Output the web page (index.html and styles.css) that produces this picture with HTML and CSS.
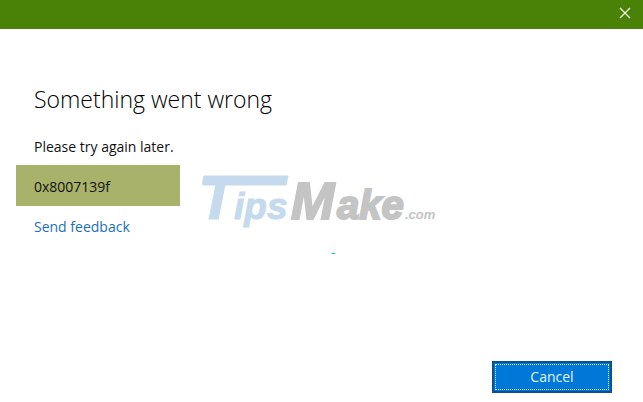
FILE: index.html
```
<!DOCTYPE html>
<html lang="en">
<head>
    <meta charset="UTF-8">
    <title>Something went wrong</title>
    <link rel="stylesheet" href="styles.css">
</head>
<body>
    <header class="title-bar">
        <button class="close-btn" type="button" aria-label="Close">
            <svg width="12" height="12" viewBox="0 0 12 12">
                <path d="M1 1L11 11M11 1L1 11" fill="none" stroke="#f4fbe4" stroke-width="1.2"/>
            </svg>
        </button>
    </header>

    <main class="content">
        <h1 class="heading">Something went wrong</h1>
        <p class="message">Please try again later.</p>
        <p class="error-code">0x8007139f</p>
        <a class="feedback" href="#">Send feedback</a>
    </main>

    <footer class="actions">
        <button class="cancel-btn" type="button">Cancel</button>
    </footer>

    <!-- watermark over the dialog -->
    <svg class="watermark" width="260" height="110" viewBox="0 -20 260 110">
        <g class="mark-blue">
            <path d="M13 7H97L95 16H12Z"/>
            <text x="7" y="50" font-size="62">T</text>
            <text x="43" y="50" font-size="37">ips</text>
        </g>
        <g class="mark-gray">
            <text x="100" y="50" font-size="52">M</text>
            <text x="146" y="50" font-size="40">ake</text>
        </g>
        <text class="mark-domain" x="214" y="50" font-size="13">.com</text>
        <path d="M140 85Q142 82 145 85Z" fill="#35b5bd"/>
    </svg>
</body>
</html>
```
FILE: styles.css
```
* {
    box-sizing: border-box;
}

body {
    margin: 0;
    min-height: 100vh;
    display: flex;
    flex-direction: column;
    position: relative;
    background: #fff;
    color: #111;
    font-family: "Segoe UI", "Open Sans", sans-serif;
    font-size: 14px;
    line-height: 20px;
}

.title-bar {
    display: flex;
    justify-content: flex-end;
    height: 29px;
    background: #4a8208;
}

.close-btn {
    display: flex;
    align-items: center;
    justify-content: center;
    width: 36px;
    padding: 0 0 3px;
    border: none;
    background: none;
    cursor: pointer;
}

.content {
    flex: 1;
    display: flex;
    flex-direction: column;
    align-items: flex-start;
    padding: 54px 34px 0;
}

.heading {
    margin: 0 0 22px;
    font-size: 23px;
    font-weight: 300;
    line-height: 32px;
    color: #000;
}

.message {
    margin: 0 0 8px;
}

.error-code {
    width: 164px;
    margin: 0 0 11px -18px;
    padding: 12px 18px 9px;
    background: #a8b26a;
}

.feedback {
    color: #1a6fb8;
    text-decoration: none;
}

.feedback:hover {
    text-decoration: underline;
}

.actions {
    display: flex;
    justify-content: flex-end;
    padding: 0 31px 9px;
}

.cancel-btn {
    width: 120px;
    height: 32px;
    padding: 0;
    border: 2px solid #0a4f91;
    outline: 1px dotted #d5efff;
    outline-offset: -4px;
    background: #0078d7;
    color: #e4f6ff;
    font: inherit;
    cursor: pointer;
}

.watermark {
    position: absolute;
    top: 149px;
    left: 191px;
    pointer-events: none;
    font-family: "Liberation Sans", Arial, sans-serif;
    font-weight: bold;
    font-style: italic;
}

.mark-blue {
    fill: #c5daed;
    stroke: #c5daed;
    stroke-width: 1;
}

.mark-gray {
    fill: #c4c4c4;
    stroke: #c4c4c4;
    stroke-width: 2;
}

.mark-domain {
    fill: #c4c4c4;
}
```
